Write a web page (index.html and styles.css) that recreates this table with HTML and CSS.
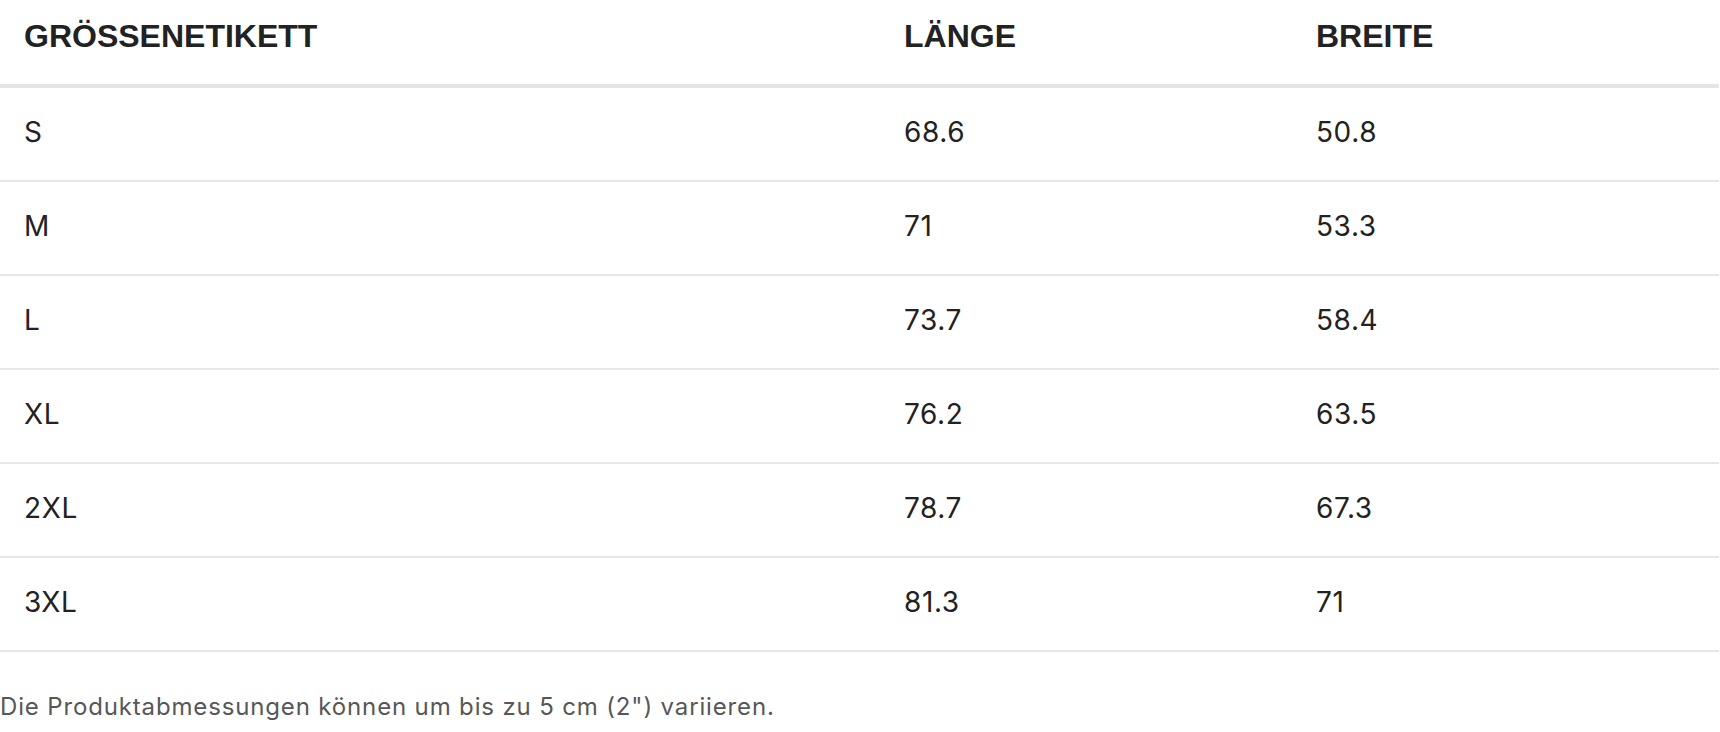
FILE: index.html
```html
<!DOCTYPE html>
<html lang="de">
<head>
<meta charset="utf-8">
<title>Größentabelle</title>
<link rel="stylesheet" href="styles.css">
</head>
<body>
<div class="size-guide">
  <table class="size-table">
    <colgroup>
      <col class="col-size">
      <col class="col-length">
      <col class="col-width">
    </colgroup>
    <thead>
      <tr>
        <th>GRÖSSENETIKETT</th>
        <th>LÄNGE</th>
        <th>BREITE</th>
      </tr>
    </thead>
    <tbody>
      <tr><td>S</td><td>68.6</td><td>50.8</td></tr>
      <tr><td>M</td><td>71</td><td>53.3</td></tr>
      <tr><td>L</td><td>73.7</td><td>58.4</td></tr>
      <tr><td>XL</td><td>76.2</td><td>63.5</td></tr>
      <tr><td>2XL</td><td>78.7</td><td>67.3</td></tr>
      <tr><td>3XL</td><td>81.3</td><td>71</td></tr>
    </tbody>
  </table>
  <p class="note">Die Produktabmessungen können um bis zu 5 cm (2") variieren.</p>
</div>
</body>
</html>
```

FILE: styles.css
```css
html, body {
  margin: 0;
  padding: 0;
  background: #ffffff;
}

body {
  font-family: Inter, "Open Sans", "Liberation Sans", sans-serif;
  color: #222222;
}

.size-guide {
  width: 1719px;
}

.size-table {
  width: 100%;
  border-collapse: separate;
  border-spacing: 0;
  table-layout: fixed;
}

.col-size {
  width: 880px;
}

.col-length {
  width: 412px;
}

.size-table th {
  font-family: "Liberation Sans", Arial, sans-serif;
  font-weight: 700;
  font-size: 32px;
  line-height: 37px;
  color: #222222;
  text-align: left;
  padding: 18px 24px 29px;
  border-bottom: 4px solid #e5e5e5;
}

.size-table td {
  font-size: 28px;
  font-weight: 400;
  line-height: 34px;
  letter-spacing: 0.6px;
  color: #222222;
  height: 88px;
  padding: 0 24px 4px;
  vertical-align: middle;
  border-bottom: 2px solid #e6e6e6;
}

.note {
  margin: 37px 0 0;
  font-size: 24px;
  line-height: 36px;
  letter-spacing: 0.85px;
  color: #575757;
}
```
